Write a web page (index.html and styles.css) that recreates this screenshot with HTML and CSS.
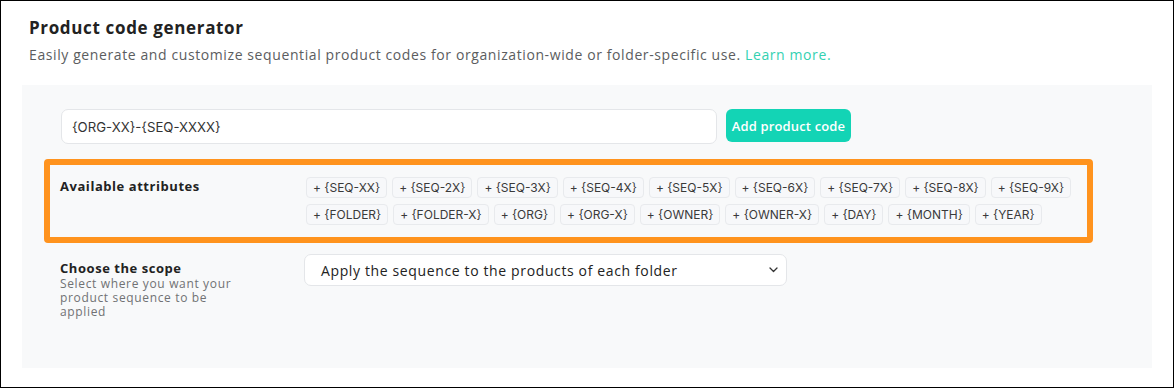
FILE: index.html
```html
<!DOCTYPE html>
<html>
<head>
  <meta charset="UTF-8">
  <title>Product code generator</title>
  <link rel="stylesheet" href="styles.css">
</head>
<body>
  <div class="frame">
    <!-- header -->
    <div class="header">
      <h1 class="title">Product code generator</h1>
      <p class="subtitle">Easily generate and customize sequential product codes for organization-wide or folder-specific use. <a href="#" class="learn-more">Learn more.</a></p>
    </div>

    <div class="panel">
      <!-- code input -->
      <div class="code-row">
        <input type="text" class="code-input" value="{ORG-XX}-{SEQ-XXXX}">
        <button class="add-button">Add product code</button>
      </div>

      <!-- attributes -->
      <div class="attributes">
        <div class="row-label">Available attributes</div>
        <div class="tags">
          <span class="tag">+ {SEQ-XX}</span>
          <span class="tag">+ {SEQ-2X}</span>
          <span class="tag">+ {SEQ-3X}</span>
          <span class="tag">+ {SEQ-4X}</span>
          <span class="tag">+ {SEQ-5X}</span>
          <span class="tag">+ {SEQ-6X}</span>
          <span class="tag">+ {SEQ-7X}</span>
          <span class="tag">+ {SEQ-8X}</span>
          <span class="tag">+ {SEQ-9X}</span>
          <span class="tag">+ {FOLDER}</span>
          <span class="tag">+ {FOLDER-X}</span>
          <span class="tag">+ {ORG}</span>
          <span class="tag">+ {ORG-X}</span>
          <span class="tag">+ {OWNER}</span>
          <span class="tag">+ {OWNER-X}</span>
          <span class="tag">+ {DAY}</span>
          <span class="tag">+ {MONTH}</span>
          <span class="tag">+ {YEAR}</span>
        </div>
      </div>

      <!-- scope -->
      <div class="scope">
        <div class="scope-text">
          <div class="row-label">Choose the scope</div>
          <div class="scope-help">Select where you want your product sequence to be applied</div>
        </div>
        <div class="scope-select">
          <span>Apply the sequence to the products of each folder</span>
          <svg width="9" height="6" viewBox="0 0 9 6"><path d="M1 1l3.5 3.5L8 1" fill="none" stroke="#333" stroke-width="1.3" stroke-linecap="round" stroke-linejoin="round"/></svg>
        </div>
      </div>
    </div>
  </div>
</body>
</html>
```

FILE: styles.css
```css
body {
  margin: 0;
  padding: 0;
  background-color: white;
  font-family: "Open Sans", Arial, sans-serif;
}

.frame {
  width: 1174px;
  height: 388px;
  box-sizing: border-box;
  border: 1px solid #000;
  padding: 0 21px;
}

/* header */
.header {
  padding: 15px 7px 0 7px;
  height: 69px;
}

.title {
  margin: 0;
  font-size: 17px;
  font-weight: 700;
  letter-spacing: 0.65px;
  color: #222;
  line-height: 24px;
}

.subtitle {
  margin: 6px 0 0 0;
  font-size: 14px;
  letter-spacing: 0.6px;
  color: #5b5d60;
  line-height: 18px;
}

.learn-more {
  color: #33d1b1;
  text-decoration: none;
}

/* panel */
.panel {
  background-color: #f8f9fa;
  height: 283px;
  padding: 24px 38px 0 38px;
  box-sizing: border-box;
}

.code-row {
  display: flex;
  align-items: flex-start;
  gap: 9px;
  margin-left: 1px;
}

.code-input {
  width: 656px;
  height: 35px;
  box-sizing: border-box;
  border: 1px solid #e4e6e9;
  border-radius: 7px;
  background-color: white;
  padding: 0 10px;
  font-family: Inter, sans-serif;
  font-size: 13.2px;
  color: #333;
  outline: none;
}

.add-button {
  width: 125px;
  height: 33px;
  border: none;
  border-radius: 6px;
  background-color: #13d4b5;
  color: white;
  font-family: "Open Sans", sans-serif;
  font-size: 13px;
  font-weight: 600;
  letter-spacing: 0.15px;
  padding: 0;
  cursor: pointer;
}

/* attributes */
.attributes {
  display: flex;
  margin: 15px 21px 0 -16px;
  border: 6px solid #ff931e;
  border-radius: 4px;
  padding: 12px 0 12px 10px;
}

.row-label {
  font-size: 13px;
  font-weight: 700;
  color: #222;
  letter-spacing: 0.55px;
  line-height: 18px;
}

.attributes .row-label {
  width: 246px;
  flex-shrink: 0;
}

.tags {
  display: flex;
  flex-wrap: wrap;
  gap: 6px 5px;
}

.tag {
  display: inline-flex;
  align-items: center;
  height: 21px;
  box-sizing: border-box;
  padding: 0 6px;
  border: 1px solid #e8eaed;
  border-radius: 4px;
  background-color: #f7f8fa;
  font-family: Inter, sans-serif;
  font-size: 12px;
  color: #3a3a3a;
  white-space: nowrap;
}

/* scope */
.scope {
  display: flex;
  margin-top: 11px;
}

.scope-text {
  width: 244px;
  flex-shrink: 0;
  padding-top: 5px;
}

.scope-help {
  font-size: 12px;
  line-height: 14px;
  color: #707274;
  letter-spacing: 0.65px;
  width: 182px;
}

.scope-select {
  width: 483px;
  height: 32px;
  box-sizing: border-box;
  border: 1px solid #e4e6e9;
  border-radius: 7px;
  background-color: white;
  display: flex;
  align-items: center;
  justify-content: space-between;
  padding: 0 8px 0 16px;
  font-size: 14px;
  letter-spacing: 0.63px;
  color: #222;
}
```
